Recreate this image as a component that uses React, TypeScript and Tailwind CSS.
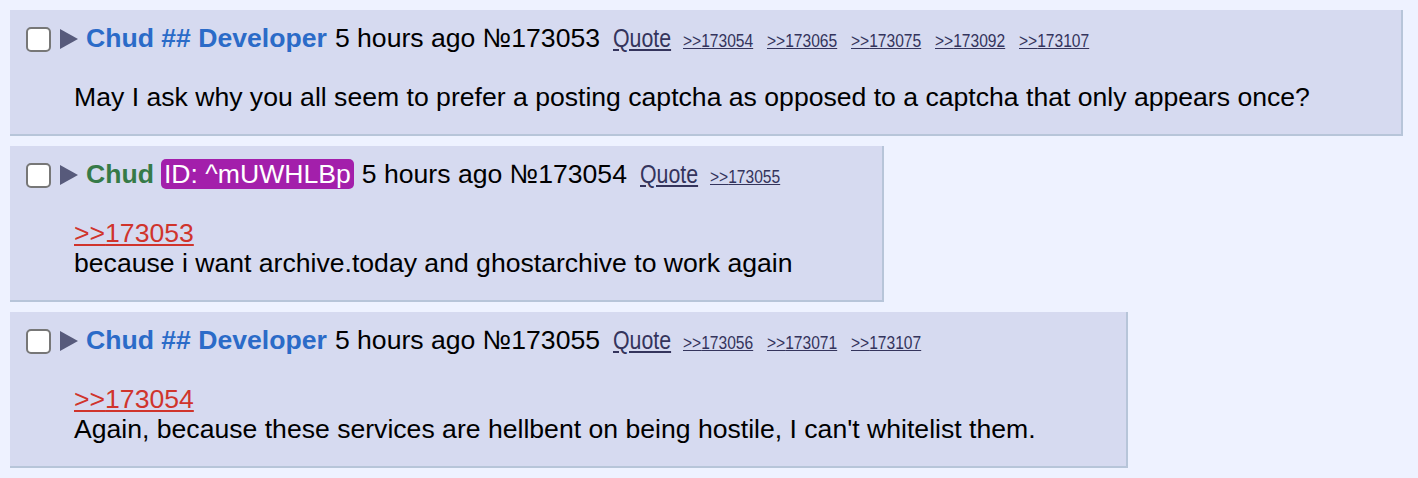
import React from 'react';

interface Post {
  no: number;
  name: string;
  tone: 'dev' | 'anon';
  id?: string;
  width: string;
  replyTo?: number;
  text: string;
  backlinks: number[];
}

const posts: Post[] = [
  {
    no: 173053,
    name: 'Chud ## Developer',
    tone: 'dev',
    width: 'w-[1393px]',
    text: 'May I ask why you all seem to prefer a posting captcha as opposed to a captcha that only appears once?',
    backlinks: [173054, 173065, 173075, 173092, 173107],
  },
  {
    no: 173054,
    name: 'Chud',
    tone: 'anon',
    id: '^mUWHLBp',
    width: 'w-[874px]',
    replyTo: 173053,
    text: 'because i want archive.today and ghostarchive to work again',
    backlinks: [173055],
  },
  {
    no: 173055,
    name: 'Chud ## Developer',
    tone: 'dev',
    width: 'w-[1118px]',
    replyTo: 173054,
    text: "Again, because these services are hellbent on being hostile, I can't whitelist them.",
    backlinks: [173056, 173071, 173107],
  },
];

const Arrow = () => (
  <svg width="20" height="22" viewBox="0 0 20 22" className="shrink-0 block">
    <path d="M1 1 L19 11 L1 21 Z" fill="#575a7b" />
  </svg>
);

// condensed link text (the reference uses a narrow face)
const Narrow: React.FC<{ w: string; size: string; children: React.ReactNode }> = ({ w, size, children }) => (
  <a className={`ml-[13px] inline-block ${w} ${size} text-[#34345c] whitespace-nowrap`}>
    <span className="inline-block origin-left scale-x-[0.82] underline">{children}</span>
  </a>
);

const PostCard: React.FC<{ post: Post }> = ({ post }) => (
  <div className={`${post.width} bg-[#d6daf0] border-r-2 border-b-2 border-[#b7c5d9] pt-[14px] pb-[22px]`}>
    <div className="flex items-center h-[30px] pl-[16px] whitespace-nowrap">
      <span className="w-[25px] h-[25px] rounded-[5px] border-2 border-[#777777] bg-white shrink-0" />
      <span className="ml-[8px]"><Arrow /></span>
      <span className="ml-[7px]">
        <span className={`font-bold ${post.tone === 'dev' ? 'text-[#2b6bc8]' : 'text-[#367a48]'}`}>
          {post.name}
        </span>
        {post.id && (
          <span className="ml-[7px] inline-block px-[3px] h-[30px] rounded-[5px] bg-[#a31fab] text-white">
            ID: {post.id}
          </span>
        )}
        <span className={`${post.id ? 'ml-[8px]' : 'ml-[8px]'} text-black`}>5 hours ago №{post.no}</span>
        <Narrow w="w-[57px]" size="text-[26px]">Quote</Narrow>
        {post.backlinks.map((b) => (
          <Narrow key={b} w="w-[71px]" size="text-[19px]">
            &gt;&gt;{b}
          </Narrow>
        ))}
      </span>
    </div>
    <div className="mt-[28px] pl-[64px] text-black">
      {post.replyTo && (
        <div>
          <a className="underline text-[#d0342c]">&gt;&gt;{post.replyTo}</a>
        </div>
      )}
      <div>{post.text}</div>
    </div>
  </div>
);

export default function App() {
  return (
    <div
      className="min-h-[478px] bg-[#eef2ff] p-[10px] flex flex-col items-start gap-[10px] text-[26.6px] leading-[30px]"
      style={{ fontFamily: '"Liberation Sans", Arial, sans-serif' }}
    >
      {posts.map((p) => (
        <PostCard key={p.no} post={p} />
      ))}
    </div>
  );
}
